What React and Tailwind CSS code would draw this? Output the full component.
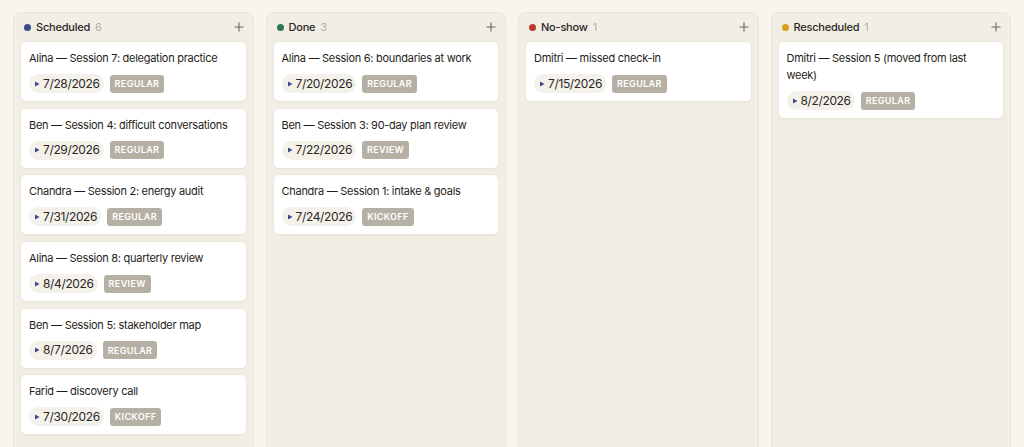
import React from "react";

const columns = [
  {
    name: "Scheduled",
    dot: "bg-[#3b4a8c]",
    cards: [
      { title: "Alina — Session 7: delegation practice", date: "7/28/2026", tag: "Regular" },
      { title: "Ben — Session 4: difficult conversations", date: "7/29/2026", tag: "Regular" },
      { title: "Chandra — Session 2: energy audit", date: "7/31/2026", tag: "Regular" },
      { title: "Alina — Session 8: quarterly review", date: "8/4/2026", tag: "Review" },
      { title: "Ben — Session 5: stakeholder map", date: "8/7/2026", tag: "Regular" },
      { title: "Farid — discovery call", date: "7/30/2026", tag: "Kickoff" },
    ],
  },
  {
    name: "Done",
    dot: "bg-[#2e7a4f]",
    cards: [
      { title: "Alina — Session 6: boundaries at work", date: "7/20/2026", tag: "Regular" },
      { title: "Ben — Session 3: 90-day plan review", date: "7/22/2026", tag: "Review" },
      { title: "Chandra — Session 1: intake & goals", date: "7/24/2026", tag: "Kickoff" },
    ],
  },
  {
    name: "No-show",
    dot: "bg-[#c0392b]",
    cards: [{ title: "Dmitri — missed check-in", date: "7/15/2026", tag: "Regular" }],
  },
  {
    name: "Rescheduled",
    dot: "bg-[#d4a017]",
    cards: [{ title: "Dmitri — Session 5 (moved from last week)", date: "8/2/2026", tag: "Regular" }],
  },
];

function Card({ card }) {
  return (
    <div className="bg-white rounded-md border border-[#ece7dc] px-[8px] pt-[8px] pb-[8px] shadow-[0_1px_1px_rgba(0,0,0,0.03)]">
      <div className="text-[11px] leading-[17px] tracking-[-0.025em] text-[#1f1d1a]">{card.title}</div>
      <div className="flex items-center gap-[6px] mt-[7px]">
        <div className="flex items-center gap-[3px] h-[19px] rounded-full bg-[#f4f1eb] pl-[5px] pr-[4px]">
          <svg width="6" height="6" viewBox="0 0 6 6">
            <path d="M1 0.5 L5.5 3 L1 5.5 Z" fill="#3b4a8c" />
          </svg>
          <span className="text-[12px] tracking-[-0.03em] text-[#2a2825]">{card.date}</span>
        </div>
        <span className="h-[18px] flex items-center px-[5px] rounded-[3px] bg-[#b5b0a3] text-white text-[9px] font-semibold uppercase tracking-[0.04em]">
          {card.tag}
        </span>
      </div>
    </div>
  );
}

export default function App() {
  return (
    <div
      className="h-[447px] overflow-hidden bg-[#f8f5ef] px-[13px] pt-[12px]"
      style={{ fontFamily: "Inter, 'Noto Sans', sans-serif" }}
    >
      <div className="grid grid-cols-4 gap-[12px] h-[460px]">
        {columns.map((col) => (
          <div key={col.name} className="bg-[#f2eee5] rounded-lg border border-[#ebe6da] px-[6px]">
            <div className="flex items-center h-[28px] pl-[4px] pr-[3px]">
              <span className={`w-[7px] h-[7px] rounded-full ${col.dot}`} />
              <span className="ml-[5px] text-[11px] font-medium tracking-[-0.02em] text-[#2a2825]">{col.name}</span>
              <span className="ml-[5px] text-[11px] text-[#b5b0a5]">{col.cards.length}</span>
              <svg className="ml-auto" width="10" height="10" viewBox="0 0 10 10">
                <path d="M5 0.5 V9.5 M0.5 5 H9.5" stroke="#6b665d" strokeWidth="1.1" />
              </svg>
            </div>
            <div className="flex flex-col gap-[5.7px]">
              {col.cards.map((c) => (
                <Card key={c.title} card={c} />
              ))}
            </div>
          </div>
        ))}
      </div>
    </div>
  );
}
